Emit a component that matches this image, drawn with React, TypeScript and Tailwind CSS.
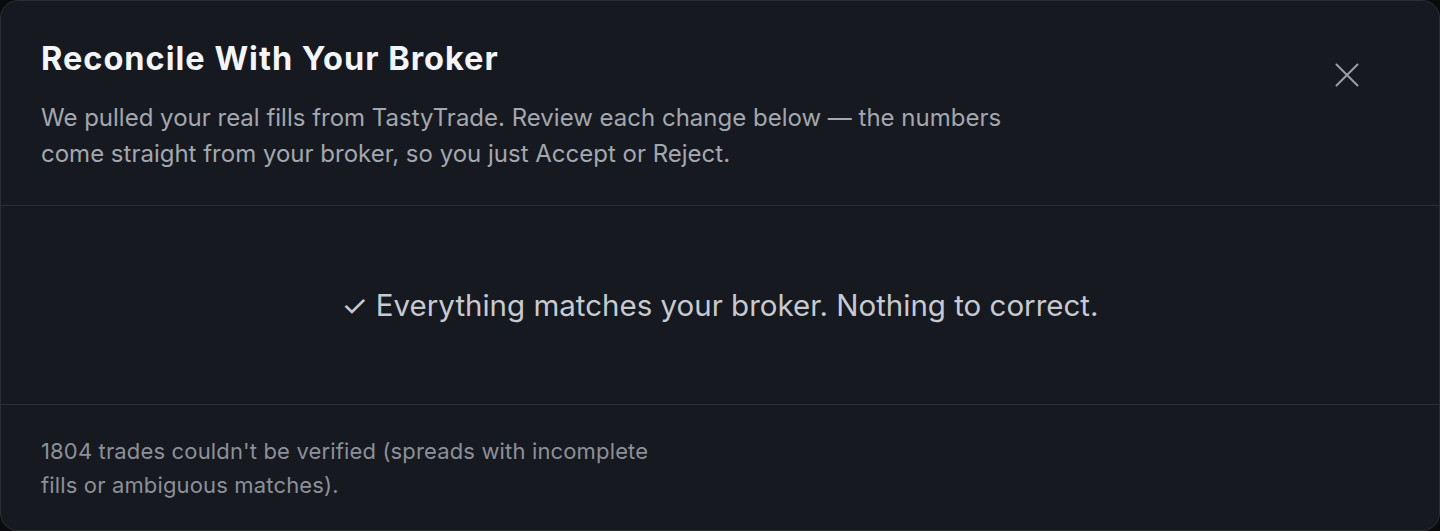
import React from "react";

export default function App() {
  return (
    <div className="w-[1440px] h-[531px] bg-[#0a0b0d] font-['Inter',sans-serif]">
      <div className="flex h-full flex-col rounded-[18px] border border-[#2b2e34] bg-[#161920]">
        {/* Header */}
        <div className="flex items-start justify-between border-b border-[#2b2e34] pl-10 pr-[80px] pt-[37px] pb-[33px]">
          <div>
            <h2 className="text-[32.5px] font-bold leading-[42px] tracking-[1px] text-[#f3f5f8]">
              Reconcile With Your Broker
            </h2>
            <p className="mt-[20px] max-w-[1000px] text-[24px] leading-[36px] text-[#a3a7af]">
              We pulled your real fills from TastyTrade. Review each change below — the numbers come straight from your broker, so you just Accept or Reject.
            </p>
          </div>
          <button className="mt-[25px] text-[#9a9ea6]">
            <svg width="24" height="24" viewBox="0 0 24 24" fill="none" stroke="currentColor" strokeWidth="2" strokeLinecap="round">
              <path d="M1.5 1.5l21 21M22.5 1.5l-21 21" />
            </svg>
          </button>
        </div>

        {/* Body */}
        <div className="flex h-[199px] items-center justify-center border-b border-[#2b2e34]">
          <p className="text-[29.5px] text-[#c7cad0]">✓ Everything matches your broker. Nothing to correct.</p>
        </div>

        {/* Footer */}
        <div className="flex-1 px-10 pt-[29px]">
          <p className="max-w-[640px] text-[22px] leading-[34px] tracking-[0.15px] text-[#8c9099]">
            1804 trades couldn't be verified (spreads with incomplete fills or ambiguous matches).
          </p>
        </div>
      </div>
    </div>
  );
}
